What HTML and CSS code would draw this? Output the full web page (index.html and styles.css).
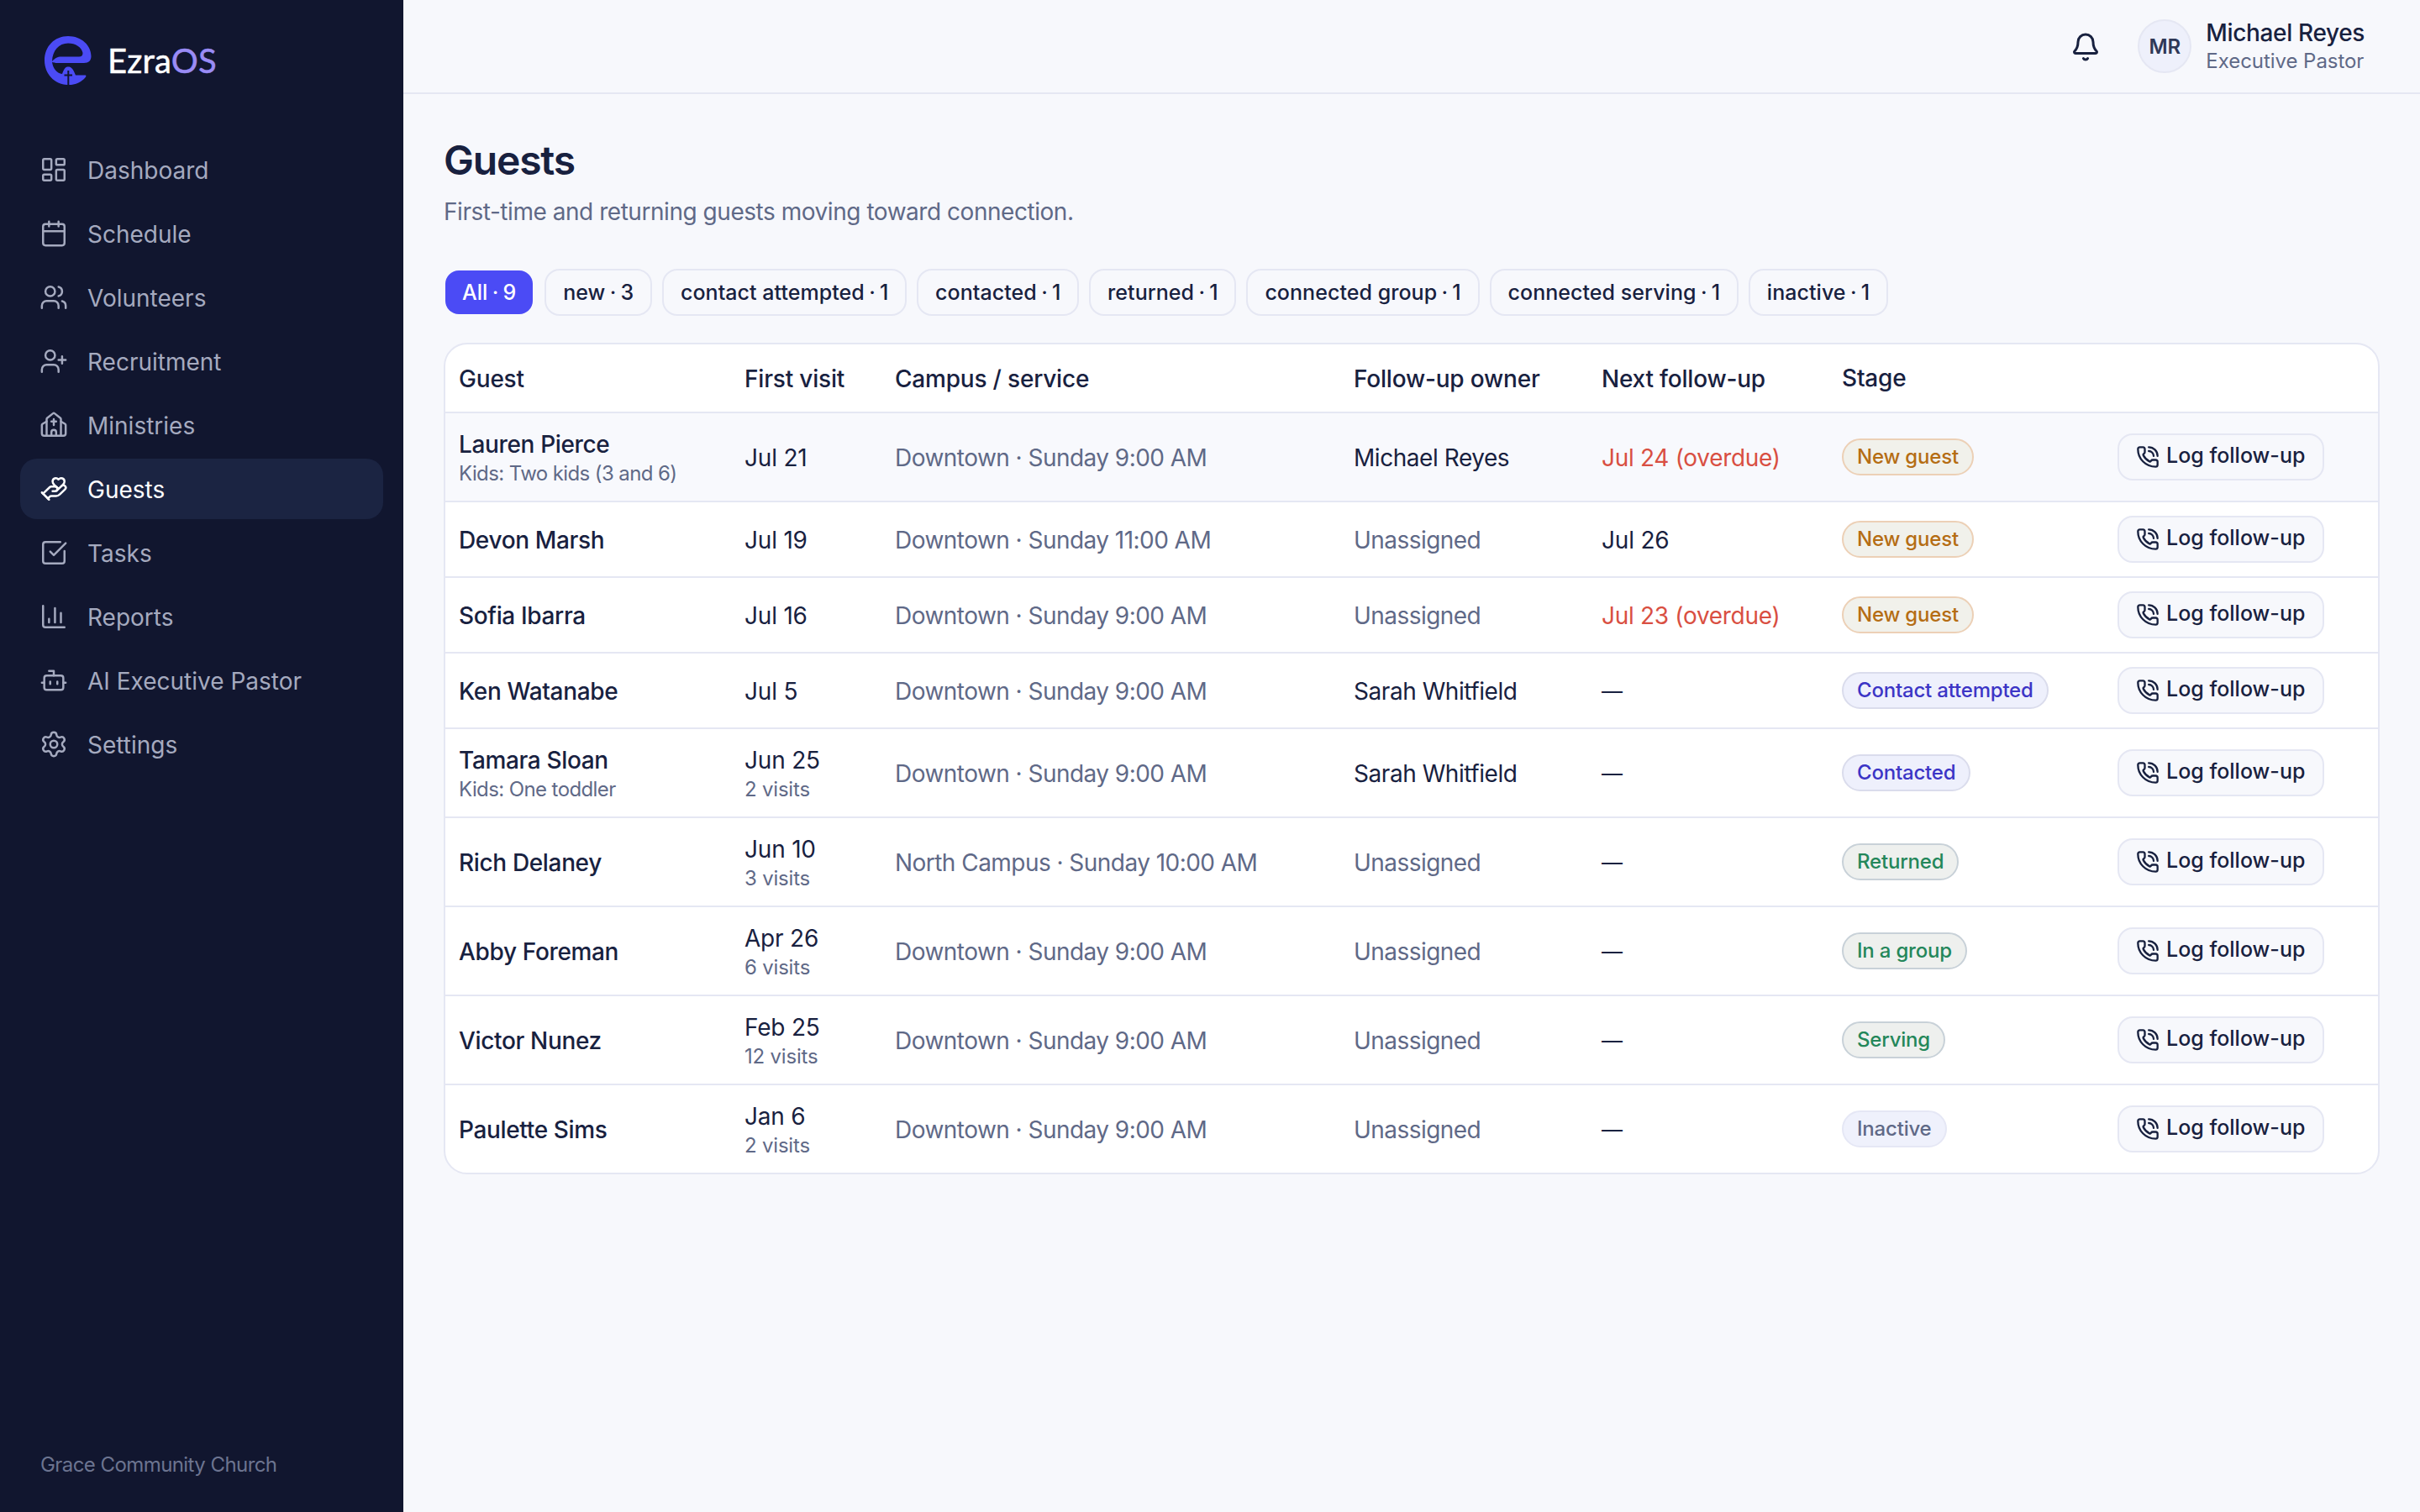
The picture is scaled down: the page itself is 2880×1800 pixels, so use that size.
FILE: index.html
```html
<!DOCTYPE html>
<html lang="en">
<head>
<meta charset="utf-8">
<title>Guests · EzraOS</title>
<link rel="stylesheet" href="styles.css">
</head>
<body>
<svg class="sprite" aria-hidden="true">
  <symbol id="phone" viewBox="0 0 24 24"><path d="M13 2a9 9 0 0 1 9 9"/><path d="M13 6a5 5 0 0 1 5 5"/><path d="M13.832 16.568a1 1 0 0 0 1.213-.303l.355-.465A2 2 0 0 1 17 15h3a2 2 0 0 1 2 2v3a2 2 0 0 1-2 2A18 18 0 0 1 2 4a2 2 0 0 1 2-2h3a2 2 0 0 1 2 2v3a2 2 0 0 1-.8 1.6l-.468.351a1 1 0 0 0-.292 1.233 14 14 0 0 0 6.392 6.384"/></symbol>
</svg>
<div class="app">
  <aside class="sidebar">
    <div class="brand">
      <svg class="brand-mark" viewBox="0 0 56 58">
        <path fill="#4b4bf5" fill-rule="evenodd" d="M28 0C44 0 55.500 11 55.500 24C55.500 29 52.500 32 47 32H15C11 32 10 31 9 31C10 38 14 44 21 45C23 39 25 36.500 28 36.500C32 36.500 34 39 37 46.500H49C50 47.500 49 49 47 51C42 55.500 36 58 29.500 58H27C12 57.500 0 45 0 29C0 12 12 0 28 0ZM28 8.500C17 8.500 9.500 17 9 30C13 26 15 24.500 20 24.500H41C44 24.500 45.500 23 45.500 20C44 13 37 8.500 28 8.500Z"/>
        <path fill="none" stroke="#11162f" stroke-width="2" d="M28.300 41V58M23.500 46.500H33"/>
      </svg>
      <span class="wordmark">Ezra<span class="wordmark-os">OS</span></span>
    </div>
    <nav class="nav">
      <a class="nav-item"><svg class="icon" viewBox="0 0 24 24"><rect width="7" height="9" x="3" y="3" rx="1"/><rect width="7" height="5" x="14" y="3" rx="1"/><rect width="7" height="9" x="14" y="12" rx="1"/><rect width="7" height="5" x="3" y="16" rx="1"/></svg><span>Dashboard</span></a>
      <a class="nav-item"><svg class="icon" viewBox="0 0 24 24"><path d="M8 2v4M16 2v4"/><rect width="18" height="18" x="3" y="4" rx="2"/><path d="M3 10h18"/></svg><span>Schedule</span></a>
      <a class="nav-item"><svg class="icon" viewBox="0 0 24 24"><path d="M16 21v-2a4 4 0 0 0-4-4H6a4 4 0 0 0-4 4v2"/><path d="M16 3.128a4 4 0 0 1 0 7.744"/><path d="M22 21v-2a4 4 0 0 0-3-3.870"/><circle cx="9" cy="7" r="4"/></svg><span>Volunteers</span></a>
      <a class="nav-item"><svg class="icon" viewBox="0 0 24 24"><path d="M16 21v-2a4 4 0 0 0-4-4H6a4 4 0 0 0-4 4v2"/><circle cx="9" cy="7" r="4"/><path d="M19 8v6M22 11h-6"/></svg><span>Recruitment</span></a>
      <a class="nav-item"><svg class="icon" viewBox="0 0 24 24"><path d="M10 9h4M12 7v5"/><path d="M14 21v-3a2 2 0 0 0-4 0v3"/><path d="m18 9 3.520 2.147a1 1 0 0 1 .480.854V19a2 2 0 0 1-2 2H4a2 2 0 0 1-2-2v-6.999a1 1 0 0 1 .480-.854L6 9"/><path d="M6 21V7a1 1 0 0 1 .376-.782l5-3.999a1 1 0 0 1 1.249.001l5 4A1 1 0 0 1 18 7v14"/></svg><span>Ministries</span></a>
      <a class="nav-item active"><svg class="icon" viewBox="0 0 24 24"><path d="M11 14h2a2 2 0 0 0 0-4h-3c-.600 0-1.100.200-1.400.600L3 16"/><path d="m14.450 13.390 5.050-4.694C20.196 8 21 6.850 21 5.750a2.750 2.750 0 0 0-4.797-1.837.276.276 0 0 1-.406 0A2.750 2.750 0 0 0 11 5.750c0 1.200.802 2.248 1.500 2.946L16 11.950"/><path d="m2 15 6 6"/><path d="m7 20 1.600-1.400c.300-.400.800-.600 1.400-.600h4c1.100 0 2.100-.400 2.800-1.200l4.600-4.400a1 1 0 0 0-2.750-2.910"/></svg><span>Guests</span></a>
      <a class="nav-item"><svg class="icon" viewBox="0 0 24 24"><path d="M21 10.500V19a2 2 0 0 1-2 2H5a2 2 0 0 1-2-2V5a2 2 0 0 1 2-2h12.500"/><path d="m9 11 3 3L22 4"/></svg><span>Tasks</span></a>
      <a class="nav-item"><svg class="icon" viewBox="0 0 24 24"><path d="M3 3v16a2 2 0 0 0 2 2h16"/><path d="M18 17V9M13 17V5M8 17v-3"/></svg><span>Reports</span></a>
      <a class="nav-item"><svg class="icon" viewBox="0 0 24 24"><path d="M12 8V4H8"/><rect width="16" height="12" x="4" y="8" rx="2"/><path d="M2 14h2M20 14h2M15 13v2M9 13v2"/></svg><span>AI Executive Pastor</span></a>
      <a class="nav-item"><svg class="icon" viewBox="0 0 24 24"><path d="M9.671 4.136a2.340 2.340 0 0 1 4.659 0 2.340 2.340 0 0 0 3.319 1.915 2.340 2.340 0 0 1 2.330 4.033 2.340 2.340 0 0 0 0 3.831 2.340 2.340 0 0 1-2.330 4.033 2.340 2.340 0 0 0-3.319 1.915 2.340 2.340 0 0 1-4.659 0 2.340 2.340 0 0 0-3.320-1.915 2.340 2.340 0 0 1-2.330-4.033 2.340 2.340 0 0 0 0-3.831A2.340 2.340 0 0 1 6.350 6.051a2.340 2.340 0 0 0 3.319-1.915"/><circle cx="12" cy="12" r="3"/></svg><span>Settings</span></a>
    </nav>
    <div class="org">Grace Community Church</div>
  </aside>

  <div class="main">
    <header class="topbar">
      <svg class="icon bell" viewBox="0 0 24 24"><path d="M10.268 21a2 2 0 0 0 3.464 0"/><path d="M3.262 15.326A1 1 0 0 0 4 17h16a1 1 0 0 0 .740-1.673C19.410 13.956 18 12.499 18 8A6 6 0 0 0 6 8c0 4.499-1.411 5.956-2.738 7.326"/></svg>
      <div class="avatar">MR</div>
      <div class="user"><div class="user-name">Michael Reyes</div><div class="user-role">Executive Pastor</div></div>
    </header>

    <main class="content">
      <h1 class="title">Guests</h1>
      <p class="subtitle">First-time and returning guests moving toward connection.</p>
      <div class="chips">
        <button class="chip selected">All<span class="count"> · 9</span></button>
        <button class="chip">new<span class="count"> · 3</span></button>
        <button class="chip">contact attempted<span class="count"> · 1</span></button>
        <button class="chip">contacted<span class="count"> · 1</span></button>
        <button class="chip">returned<span class="count"> · 1</span></button>
        <button class="chip">connected group<span class="count"> · 1</span></button>
        <button class="chip">connected serving<span class="count"> · 1</span></button>
        <button class="chip">inactive<span class="count"> · 1</span></button>
      </div>

      <div class="table">
        <div class="row head"><div>Guest</div><div>First visit</div><div>Campus / service</div><div>Follow-up owner</div><div>Next follow-up</div><div>Stage</div><div></div></div>
        <div class="row tall hover"><div class="name">Lauren Pierce<small>Kids: Two kids (3 and 6)</small></div><div>Jul 21</div><div class="muted">Downtown · Sunday 9:00 AM</div><div class="owner">Michael Reyes</div><div class="overdue">Jul 24 (overdue)</div><div><span class="badge amber">New guest</span></div><div><button class="log"><svg class="icon"><use href="#phone"/></svg>Log follow-up</button></div></div>
        <div class="row"><div class="name">Devon Marsh</div><div>Jul 19</div><div class="muted">Downtown · Sunday 11:00 AM</div><div class="muted">Unassigned</div><div>Jul 26</div><div><span class="badge amber">New guest</span></div><div><button class="log"><svg class="icon"><use href="#phone"/></svg>Log follow-up</button></div></div>
        <div class="row"><div class="name">Sofia Ibarra</div><div>Jul 16</div><div class="muted">Downtown · Sunday 9:00 AM</div><div class="muted">Unassigned</div><div class="overdue">Jul 23 (overdue)</div><div><span class="badge amber">New guest</span></div><div><button class="log"><svg class="icon"><use href="#phone"/></svg>Log follow-up</button></div></div>
        <div class="row"><div class="name">Ken Watanabe</div><div>Jul 5</div><div class="muted">Downtown · Sunday 9:00 AM</div><div class="owner">Sarah Whitfield</div><div class="none">—</div><div><span class="badge indigo">Contact attempted</span></div><div><button class="log"><svg class="icon"><use href="#phone"/></svg>Log follow-up</button></div></div>
        <div class="row tall"><div class="name">Tamara Sloan<small>Kids: One toddler</small></div><div>Jun 25<small>2 visits</small></div><div class="muted">Downtown · Sunday 9:00 AM</div><div class="owner">Sarah Whitfield</div><div class="none">—</div><div><span class="badge indigo">Contacted</span></div><div><button class="log"><svg class="icon"><use href="#phone"/></svg>Log follow-up</button></div></div>
        <div class="row tall"><div class="name">Rich Delaney</div><div>Jun 10<small>3 visits</small></div><div class="muted">North Campus · Sunday 10:00 AM</div><div class="muted">Unassigned</div><div class="none">—</div><div><span class="badge green">Returned</span></div><div><button class="log"><svg class="icon"><use href="#phone"/></svg>Log follow-up</button></div></div>
        <div class="row tall"><div class="name">Abby Foreman</div><div>Apr 26<small>6 visits</small></div><div class="muted">Downtown · Sunday 9:00 AM</div><div class="muted">Unassigned</div><div class="none">—</div><div><span class="badge green">In a group</span></div><div><button class="log"><svg class="icon"><use href="#phone"/></svg>Log follow-up</button></div></div>
        <div class="row tall"><div class="name">Victor Nunez</div><div>Feb 25<small>12 visits</small></div><div class="muted">Downtown · Sunday 9:00 AM</div><div class="muted">Unassigned</div><div class="none">—</div><div><span class="badge green">Serving</span></div><div><button class="log"><svg class="icon"><use href="#phone"/></svg>Log follow-up</button></div></div>
        <div class="row tall"><div class="name">Paulette Sims</div><div>Jan 6<small>2 visits</small></div><div class="muted">Downtown · Sunday 9:00 AM</div><div class="muted">Unassigned</div><div class="none">—</div><div><span class="badge gray">Inactive</span></div><div><button class="log"><svg class="icon"><use href="#phone"/></svg>Log follow-up</button></div></div>
      </div>
    </main>
  </div>
</div>
</body>
</html>
```

FILE: styles.css
```css
* { box-sizing: border-box; }
body {
  margin: 0;
  font-family: Inter, "Liberation Sans", sans-serif;
  font-size: 28px;
  line-height: 40px;
  letter-spacing: -0.2px;
  color: #18213f;
  background: #f7f8fc;
}
button { font: inherit; letter-spacing: inherit; color: inherit; margin: 0; }
.sprite { display: none; }
.icon {
  width: 34px;
  height: 34px;
  flex: none;
  fill: none;
  stroke: currentColor;
  stroke-width: 1.75;
  stroke-linecap: round;
  stroke-linejoin: round;
}
.app { display: flex; height: 1800px; }

/* Sidebar */
.sidebar {
  width: 480px;
  flex: none;
  display: flex;
  flex-direction: column;
  padding: 43px 24px 36px;
  background: #11162f;
  color: #a5aabf;
}
.brand { display: flex; height: 58px; gap: 19px; padding-left: 29px; }
.brand-mark { width: 56px; height: 58px; }
.wordmark {
  font-family: Lato, sans-serif;
  font-size: 40px;
  line-height: 58px;
  letter-spacing: 0.2px;
  -webkit-text-stroke: 0.5px currentColor;
  color: #fff;
}
.wordmark-os { color: #9a8cf5; }
.nav { display: flex; flex-direction: column; gap: 4px; margin-top: 65px; }
.nav-item {
  display: flex;
  align-items: center;
  gap: 23px;
  height: 72px;
  padding-left: 23px;
  border-radius: 20px;
  letter-spacing: 0;
}
.nav-item span { padding-top: 1px; }
.nav-item.active { background: #1b2442; color: #fff; }
.org { margin-top: auto; padding-left: 24px; font-size: 24px; letter-spacing: -0.57px; color: #6c7490; }

/* Top bar */
.main { flex: 1; min-width: 0; }
.topbar {
  display: flex;
  align-items: center;
  justify-content: flex-end;
  height: 112px;
  padding-right: 66px;
  border-bottom: 2px solid #e5e7f3;
}
.bell { width: 36px; height: 36px; margin-right: 44px; margin-top: 2px; stroke-width: 2; }
.avatar {
  width: 64px;
  height: 64px;
  margin-right: 17px;
  border: 2px solid #e5e7f3;
  border-radius: 50%;
  background: #eef0fb;
  color: #2f3857;
  font-size: 24px;
  font-weight: 600;
  line-height: 62px;
  text-align: center;
}
.user-name { font-weight: 500; line-height: 35px; letter-spacing: -0.35px; }
.user-role { font-size: 24px; line-height: 32px; letter-spacing: -0.05px; color: #5f6987; }

/* Page */
.content { padding: 47px 48px 0; }
.title { margin: 0; font-size: 48px; font-weight: 600; line-height: 64px; letter-spacing: -1.2px; }
.subtitle { margin: 9px 0 0; letter-spacing: -0.46px; color: #5f6987; }
.chips { display: flex; gap: 12px; margin-top: 48px; }
.chip {
  height: 56px;
  padding: 0 20px;
  border: 2px solid #e5e7f3;
  border-radius: 18px;
  background: #f7f8fc;
  background-clip: padding-box;
  font-size: 25px;
  font-weight: 500;
  line-height: 50px;
  letter-spacing: 0.05px;
  white-space: nowrap;
}
.count { letter-spacing: -0.2px; word-spacing: -1.1px; }
.chip.selected { border-color: transparent; background-color: #4b4bf5; color: #fff; }

/* Guest table */
.table {
  margin-top: 32px;
  border: 2px solid #e5e7f3;
  border-radius: 28px;
  background: #fff;
  overflow: hidden;
}
.row {
  display: grid;
  grid-template-columns: 340px 179px 546px 295px 286px 328px 1fr;
  align-items: center;
  height: 90px;
  border-bottom: 2px solid #e5e7f3;
  white-space: nowrap;
}
.row > div { padding-left: 16px; }
.row > div:nth-child(-n+5) { padding-top: 1px; }
.row.head { height: 82px; font-weight: 500; }
.row.tall { height: 106px; }
.row.hover { background: #f8f9fd; }
.row:last-child { height: 104px; border-bottom: 0; }
.row small { display: block; font-size: 24px; font-weight: 400; line-height: 32px; color: #5f6987; }
.row small { margin-top: -1px; }
.name { font-weight: 500; letter-spacing: -0.35px; }
.name small { letter-spacing: -0.6px; }
.muted { letter-spacing: -0.54px; color: #5f6987; }
.owner { letter-spacing: -0.45px; }
.overdue { letter-spacing: -0.3px; color: #d94f42; }
.none { font-size: 25px; }
.badge {
  display: block;
  width: max-content;
  height: 44px;
  padding: 0 16px;
  border: 2px solid;
  border-radius: 22px;
  font-size: 24px;
  font-weight: 500;
  line-height: 40px;
}
.amber { color: #b56d14; background: #f1f1eb; border-color: #ecd0b6; }
.indigo { color: #3c35c6; background: #eef0fc; border-color: #dadcec; }
.green { color: #24875a; background: #eef0ee; border-color: #c8d1d8; }
.gray { color: #5f6987; background: #eff1fc; border-color: #e5e7f5; }
.log {
  display: flex;
  align-items: center;
  gap: 8px;
  width: 246px;
  height: 56px;
  padding: 0 20px 5px;
  border: 2px solid #e5e7f3;
  border-radius: 18px;
  background: #f7f8fc;
  font-size: 25px;
  font-weight: 500;
  letter-spacing: 0;
}
.log .icon { width: 28px; height: 28px; margin-top: 4px; stroke-width: 2; }
```
